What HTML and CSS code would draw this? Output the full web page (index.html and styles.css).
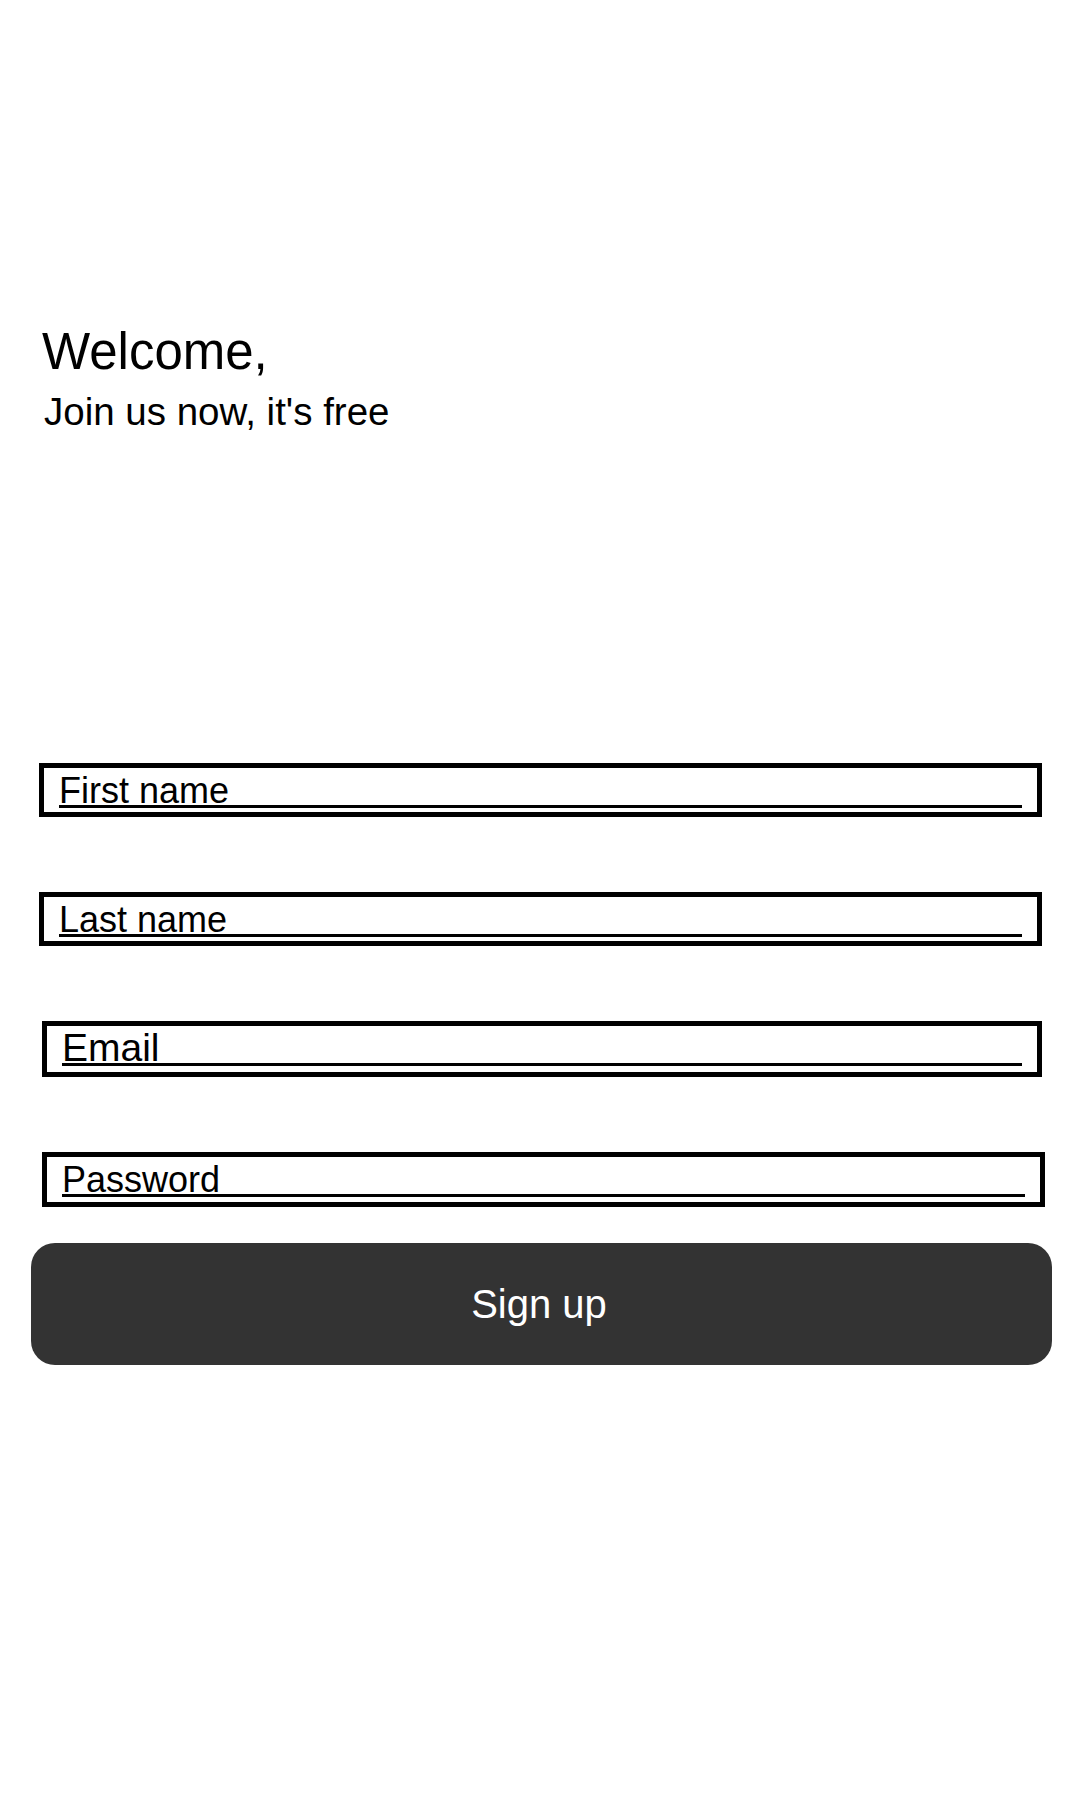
FILE: index.html
```html
<!DOCTYPE html>
<html lang="en">
<head>
<meta charset="utf-8">
<title>Sign up</title>
<link rel="stylesheet" href="styles.css">
</head>
<body>
<main class="screen">
  <header class="intro">
    <h1 class="title">Welcome,</h1>
    <p class="subtitle">Join us now, it's free</p>
  </header>
  <form class="form">
    <div class="fields">
      <div class="field field-a">
        <div class="input">First name</div>
      </div>
      <div class="field field-a">
        <div class="input">Last name</div>
      </div>
      <div class="field field-b field-email">
        <div class="input input-email">Email</div>
      </div>
      <div class="field field-b field-pass">
        <div class="input">Password</div>
      </div>
    </div>
    <button type="button" class="submit">Sign up</button>
  </form>
</main>
</body>
</html>
```

FILE: styles.css
```css
* { box-sizing: border-box; }

html, body {
  margin: 0;
  padding: 0;
  background: #ffffff;
}

body {
  font-family: "Liberation Sans", Arial, sans-serif;
  color: #000000;
  width: 1080px;
  height: 1800px;
}

.screen {
  display: flex;
  flex-direction: column;
  padding-top: 322px;
}

.intro {
  padding-left: 42px;
  display: flex;
  flex-direction: column;
  gap: 7px;
}

.title {
  margin: 0;
  font-size: 51px;
  line-height: 60px;
  font-weight: normal;
}

.subtitle {
  margin: 0 0 0 2px;
  font-size: 38.5px;
  line-height: 45px;
}

.form {
  margin-top: 329px;
  display: flex;
  flex-direction: column;
}

.fields {
  display: flex;
  flex-direction: column;
  gap: 75px;
}

.field {
  border: 5px solid #000000;
  padding: 0 15px 4px;
  height: 54px;
}

.field-a {
  margin-left: 39px;
  width: 1003px;
}

.field-b {
  margin-left: 42px;
}

.field-email {
  width: 1000px;
  height: 56px;
  padding-bottom: 6px;
}

.field-pass {
  width: 1003px;
  height: 55px;
  padding-bottom: 5px;
}

.input {
  border-bottom: 3px solid #000000;
  font-size: 36px;
  line-height: 29px;
  padding-top: 8px;
  height: 40px;
  white-space: nowrap;
}

.input-email {
  font-size: 39px;
  line-height: 30px;
  padding-top: 7px;
}

.submit {
  margin: 36px 0 0 31px;
  width: 1021px;
  height: 122px;
  border: none;
  border-radius: 24px;
  background: #333333;
  color: #ffffff;
  font-family: "Liberation Sans", Arial, sans-serif;
  font-size: 40px;
  padding: 0 5px 0 0;
  cursor: pointer;
}
```
